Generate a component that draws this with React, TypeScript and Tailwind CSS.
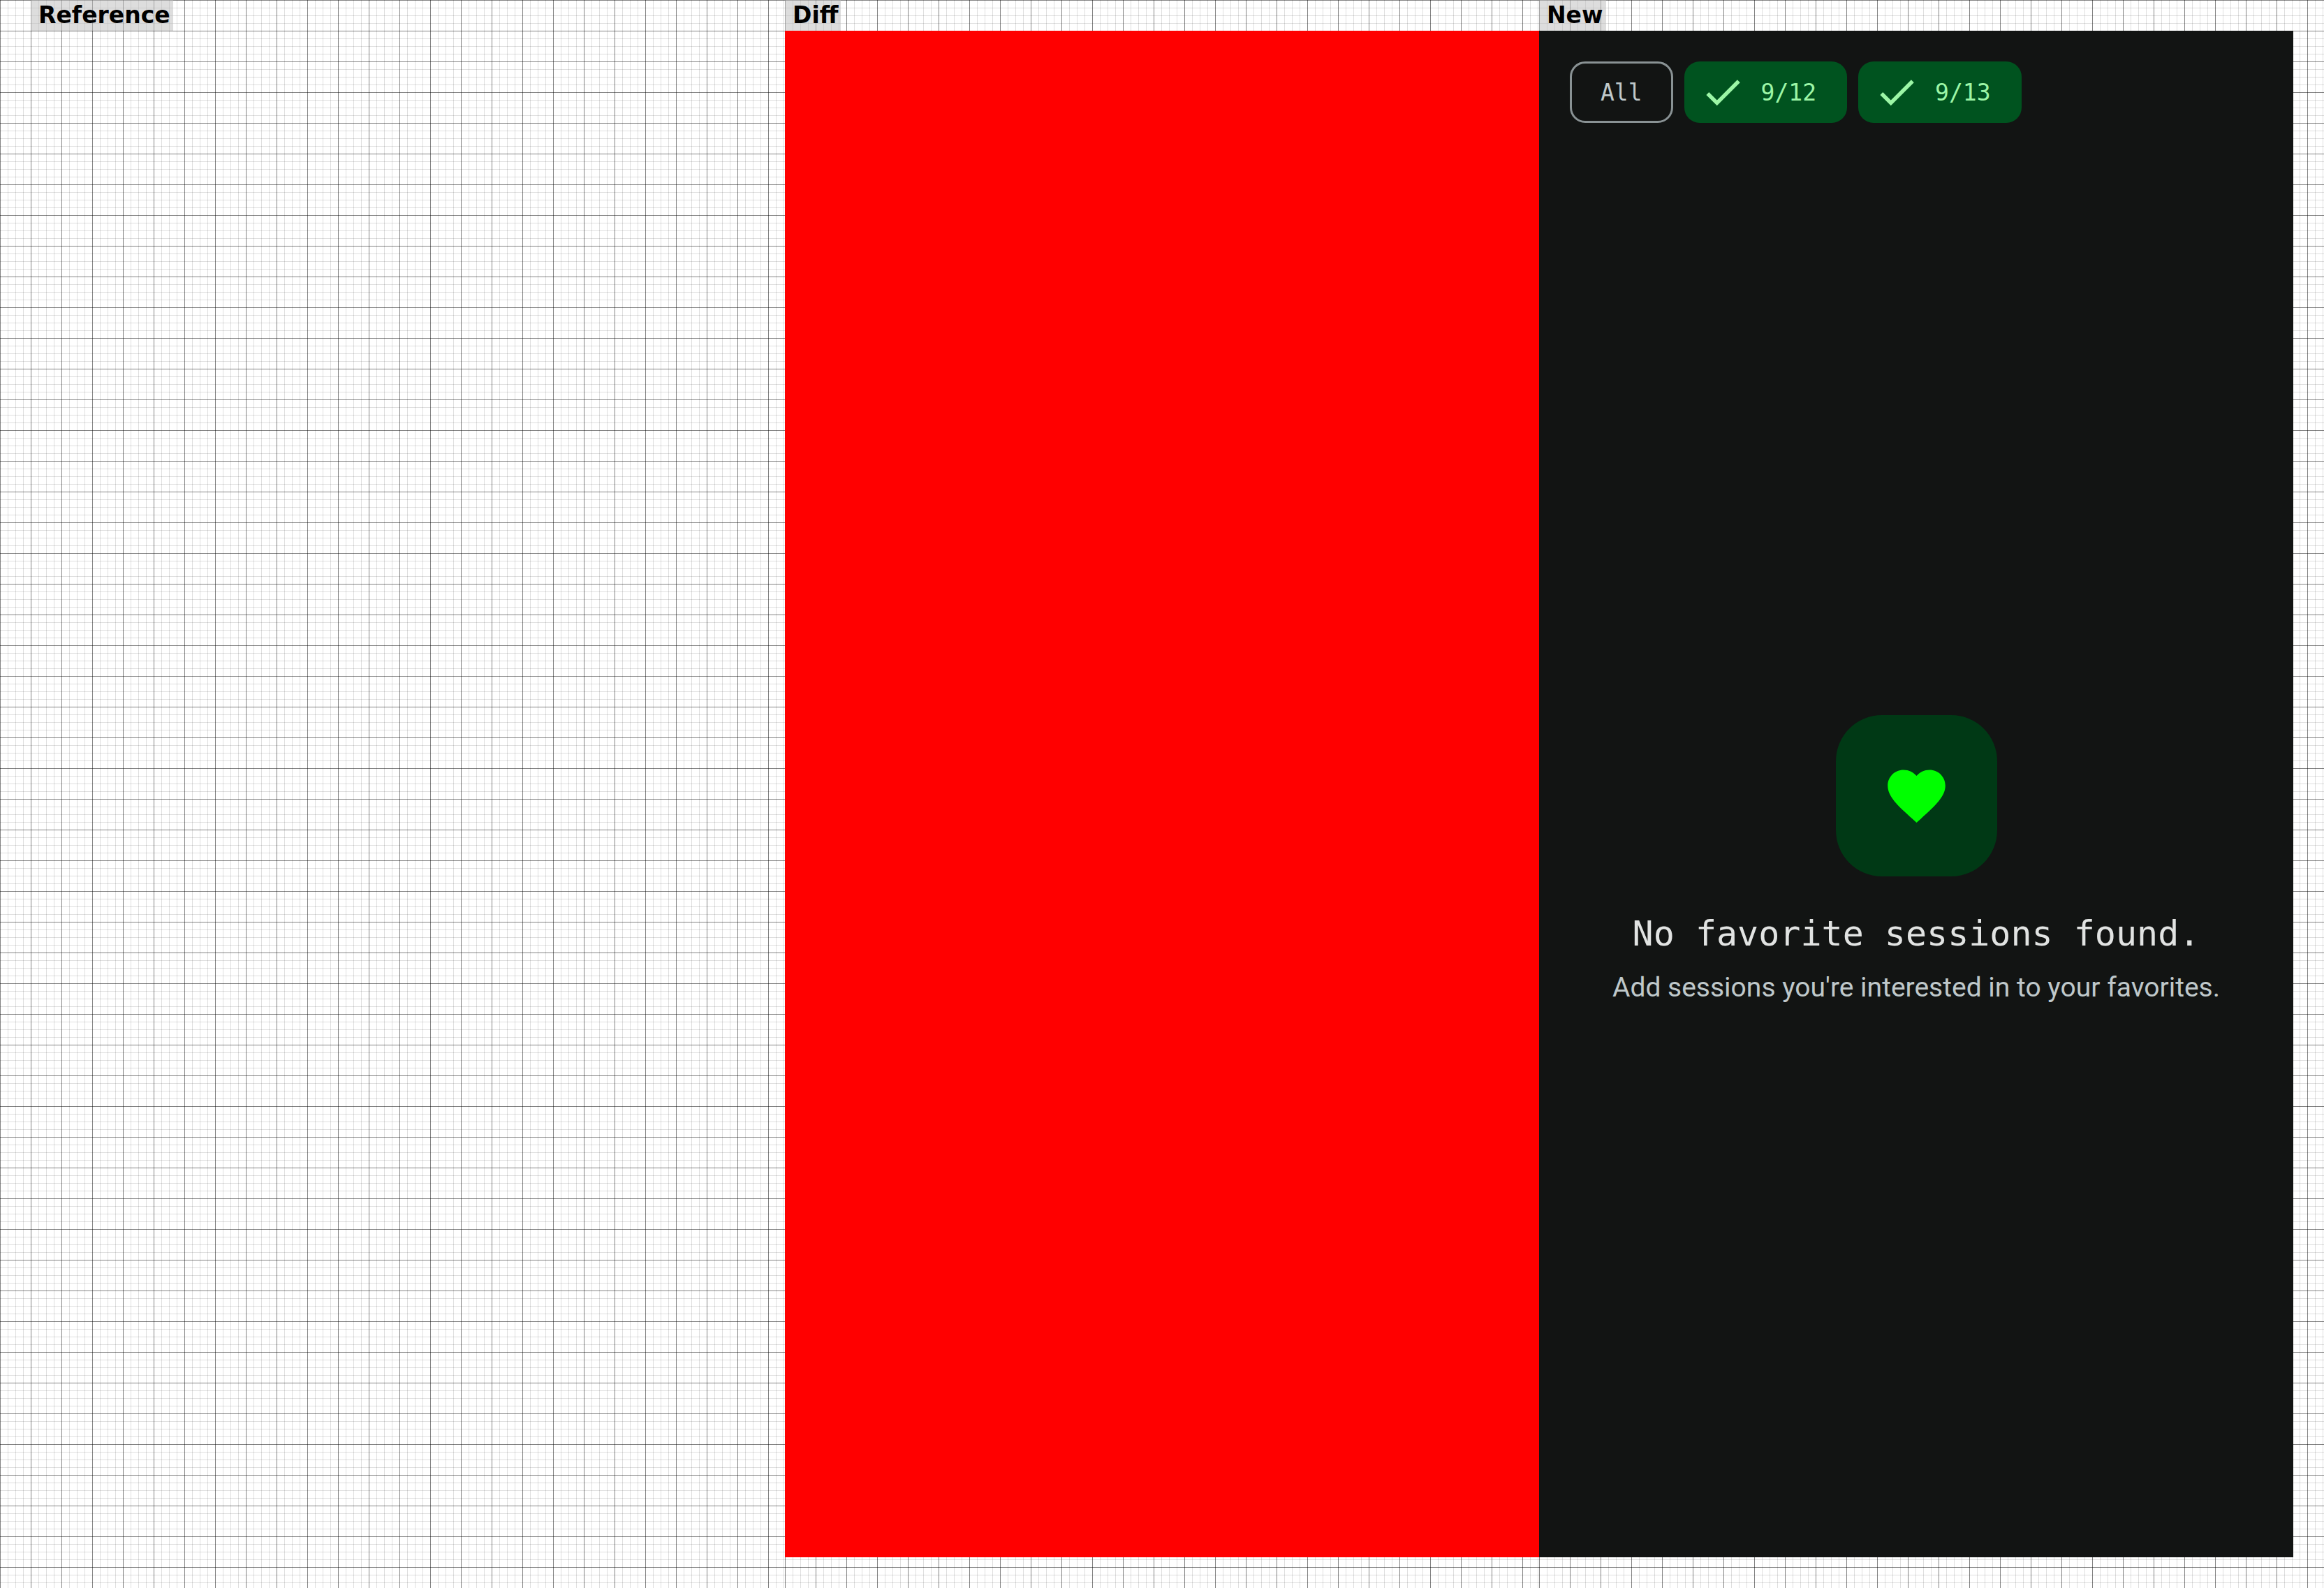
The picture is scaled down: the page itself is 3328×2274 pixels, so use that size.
import type { ReactNode } from "react";

function Column({ title, className, children }: { title: string; className: string; children?: ReactNode }) {
  return (
    <section
      className={`flex flex-col pb-11 bg-white bg-[linear-gradient(90deg,#00000068_1px,transparent_1px),linear-gradient(#00000068_1px,transparent_1px),linear-gradient(90deg,#00000020_1px,transparent_1px),linear-gradient(#00000020_1px,transparent_1px)] bg-[size:44px_44px,44px_44px,11px_11px,11px_11px] ${className}`}
    >
      <h2 className="flex h-11 items-center self-start bg-[#c0c0c088] pl-[11px] pr-1 font-['DejaVu_Sans',sans-serif] text-[33px] leading-[44px] font-bold text-black">
        {title}
      </h2>
      {children}
    </section>
  );
}

function CheckIcon() {
  return (
    <svg viewBox="0 0 24 24" className="size-[66px] shrink-0" fill="currentColor" aria-hidden="true">
      <path d="M9 16.17 4.83 12l-1.42 1.41L9 19 21 7l-1.41-1.41z" />
    </svg>
  );
}

function HeartIcon() {
  return (
    <svg viewBox="0 0 24 24" className="size-[99px]" fill="currentColor" aria-hidden="true">
      <path d="M12 21.35l-1.45-1.32C5.4 15.36 2 12.28 2 8.5 2 5.42 4.42 3 7.5 3c1.74 0 3.41.81 4.5 2.09C13.09 3.81 14.76 3 16.5 3 19.58 3 22 5.42 22 8.5c0 3.78-3.4 6.86-8.55 11.54L12 21.35z" />
    </svg>
  );
}

function FilterChip({ label, selected = false }: { label: string; selected?: boolean }) {
  return (
    <button
      type="button"
      aria-pressed={selected}
      className={`flex h-[88px] items-center rounded-[22px] font-['DejaVu_Sans_Mono',monospace] text-[33px] leading-[55px] ${
        selected
          ? "gap-[22px] bg-[#00531f] pr-[44px] pl-[22px] text-[#9cf6a6]"
          : "border-3 border-[#899294] px-[41px] text-[#bfc8ca]"
      }`}
    >
      {selected && <CheckIcon />}
      {label}
    </button>
  );
}

function FavoritesScreen() {
  return (
    <main className="flex grow flex-col bg-[#121413]">
      <div className="flex gap-4 px-11 pt-11 pb-15">
        <FilterChip label="All" />
        <FilterChip label="9/12" selected />
        <FilterChip label="9/13" selected />
      </div>
      <div className="flex grow flex-col items-center justify-center text-center">
        <div className="mb-11 flex size-[231px] items-center justify-center rounded-[66px] bg-[#003915] text-[#00ff00]">
          <HeartIcon />
        </div>
        <h1 className="mb-3 font-['DejaVu_Sans_Mono',monospace] text-[50px] leading-[76px] text-[#e1e3e2]">
          No favorite sessions found.
        </h1>
        <p className="font-[Roboto,sans-serif] text-[39px] leading-[55px] text-[#bfc8ca]">
          Add sessions you're interested in to your favorites.
        </p>
      </div>
    </main>
  );
}

export default function App() {
  return (
    <div className="grid min-h-screen grid-cols-[1124fr_1080fr_1124fr]">
      <Column title="Reference" className="pl-11" />
      <Column title="Diff" className="">
        <div className="grow bg-[#ff0000]" />
      </Column>
      <Column title="New" className="pr-11">
        <FavoritesScreen />
      </Column>
    </div>
  );
}
